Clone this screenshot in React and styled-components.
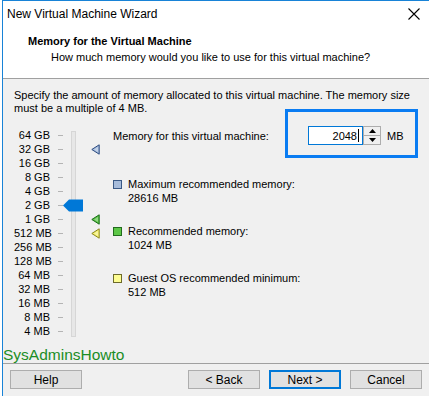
import styled, { createGlobalStyle } from "styled-components";

const GlobalStyle = createGlobalStyle`
  html, body {
    margin: 0;
    padding: 0;
    background: #fff;
  }
  body {
    font-family: "Liberation Sans", Arial, sans-serif;
    font-size: 11px;
    color: #000;
  }
`;

const scale = [
  "64 GB", "32 GB", "16 GB", "8 GB", "4 GB", "2 GB", "1 GB", "512 MB",
  "256 MB", "128 MB", "64 MB", "32 MB", "16 MB", "8 MB", "4 MB"
];

const markers = {
  1: { fill: "#a4bbdc", stroke: "#2e4c80" },
  6: { fill: "#57c143", stroke: "#1b6d1b" },
  7: { fill: "#f3ef6a", stroke: "#8a8620" }
};

const legend = [
  { label: "Maximum recommended memory:", value: "28616 MB", fill: "#a7bcdb", stroke: "#3a5986" },
  { label: "Recommended memory:", value: "1024 MB", fill: "#5cc746", stroke: "#226b1e" },
  { label: "Guest OS recommended minimum:", value: "512 MB", fill: "#fdfd92", stroke: "#6d6b2b" }
];

function Marker({ fill, stroke }) {
  return (
    <svg width="9" height="11" viewBox="0 0 9 11">
      <path d="M0.8 5.5 L8.2 0.8 L8.2 10.2 Z" fill={fill} stroke={stroke} strokeWidth="1" />
      <path d="M3 5.5 L7 3 L7 8 Z" fill="#fff" opacity="0.35" />
    </svg>
  );
}

function App() {
  return (
    <>
      <GlobalStyle />
      <Window>
        <TitleBar>
          <span>New Virtual Machine Wizard</span>
          <CloseButton>
            <svg width="12" height="12" viewBox="0 0 12 12">
              <path d="M0.5 0.5 L11.5 11.5 M11.5 0.5 L0.5 11.5" stroke="#000" strokeWidth="1.1" />
            </svg>
          </CloseButton>
        </TitleBar>

        <Header>
          <HeaderTitle>Memory for the Virtual Machine</HeaderTitle>
          <HeaderSub>How much memory would you like to use for this virtual machine?</HeaderSub>
        </Header>

        <Body>
          <Description>
            Specify the amount of memory allocated to this virtual machine. The memory size
            must be a multiple of 4 MB.
          </Description>

          <MemoryArea>
            <Scale>
              {scale.map((label, i) => (
                <ScaleLabel key={label} style={{ gridRow: i + 1 }}>{label}</ScaleLabel>
              ))}
              {scale.map((label, i) => (
                <Tick key={"t" + label} style={{ gridRow: i + 1 }} />
              ))}
              <Track />
              <Thumb style={{ gridRow: 6 }}>
                <svg width="20" height="13" viewBox="0 0 20 13">
                  <polygon points="0,6.5 6,0.5 20,0.5 20,12.5 6,12.5" fill="#0078d7" />
                </svg>
              </Thumb>
              {Object.entries(markers).map(([row, m]) => (
                <MarkerCell key={row} style={{ gridRow: Number(row) + 1 }}>
                  <Marker fill={m.fill} stroke={m.stroke} />
                </MarkerCell>
              ))}
            </Scale>

            <Details>
              <FieldRow>
                <FieldLabel>Memory for this virtual machine:</FieldLabel>
                <FieldGroup>
                  <NumberInput>
                    2048<Caret />
                  </NumberInput>
                  <Spinner>
                    <SpinButton>
                      <svg width="7" height="4" viewBox="0 0 7 4"><path d="M3.5 0 L7 4 L0 4 Z" fill="#000" /></svg>
                    </SpinButton>
                    <SpinButton>
                      <svg width="7" height="4" viewBox="0 0 7 4"><path d="M0 0 L7 0 L3.5 4 Z" fill="#000" /></svg>
                    </SpinButton>
                  </Spinner>
                  <Unit>MB</Unit>
                </FieldGroup>
              </FieldRow>

              <Legend>
                {legend.map((item) => (
                  <LegendItem key={item.label}>
                    <Swatch $fill={item.fill} $stroke={item.stroke} />
                    <div>
                      <div>{item.label}</div>
                      <div>{item.value}</div>
                    </div>
                  </LegendItem>
                ))}
              </Legend>
            </Details>
          </MemoryArea>
        </Body>

        <Footer>
          <Button>Help</Button>
          <FooterRight>
            <Button>&lt; Back</Button>
            <Button $primary>Next &gt;</Button>
            <Button>Cancel</Button>
          </FooterRight>
        </Footer>

        <Watermark>SysAdminsHowto</Watermark>
      </Window>
    </>
  );
}

export default App;

const Window = styled.div`
  position: relative;
  margin-left: 2px;
  height: 396px;
  box-sizing: border-box;
  border-left: 1px solid #1883d7;
  border-top: 1px solid #1883d7;
  display: flex;
  flex-direction: column;
  background: #f0f0f0;
  overflow: hidden;
`;

const TitleBar = styled.div`
  height: 25px;
  background: #fff;
  display: flex;
  align-items: center;
  justify-content: space-between;
  padding: 0 9px 0 4px;
  font-size: 12px;
`;

const CloseButton = styled.div`
  display: flex;
  align-items: center;
  padding-top: 1px;
`;

const Header = styled.div`
  background: #fff;
  height: 53px;
  border-bottom: 1px solid #a0a0a0;
  padding: 8px 0 0 25px;
  box-sizing: border-box;
`;

const HeaderTitle = styled.div`
  font-weight: bold;
  line-height: 14px;
`;

const HeaderSub = styled.div`
  line-height: 14px;
  margin-top: 2px;
  padding-left: 23px;
`;

const Body = styled.div`
  flex: 1;
  padding: 10px 0 0 11px;
`;

const Description = styled.div`
  line-height: 13px;
  width: 414px;
`;

const MemoryArea = styled.div`
  display: flex;
  align-items: flex-start;
  margin-top: 11px;
`;

const Scale = styled.div`
  display: grid;
  grid-template-columns: 44px 5px 20px 8px 9px;
  grid-template-rows: repeat(15, 14px);
  margin-top: 2px;
`;

const ScaleLabel = styled.div`
  grid-column: 1;
  text-align: right;
  padding-right: 8px;
  line-height: 14px;
  white-space: nowrap;
`;

const Tick = styled.div`
  grid-column: 2;
  align-self: center;
  height: 1px;
  width: 5px;
  background: #b4b4b4;
`;

const Track = styled.div`
  grid-column: 3;
  grid-row: 1 / -1;
  justify-self: center;
  width: 3px;
  margin-top: 3px;
  margin-bottom: 1px;
  background: #e7e7e7;
  border: 1px solid #d6d6d6;
  z-index: 0;
`;

const Thumb = styled.div`
  grid-column: 3;
  display: flex;
  align-items: center;
  z-index: 1;
`;

const MarkerCell = styled.div`
  grid-column: 5;
  display: flex;
  align-items: center;
`;

const Details = styled.div`
  margin-left: 13px;
  flex: 1;
  padding-right: 11px;
`;

const FieldRow = styled.div`
  display: flex;
  align-items: center;
`;

const FieldLabel = styled.div`
  width: 195px;
`;

const FieldGroup = styled.div`
  position: relative;
  display: flex;
  align-items: center;

  &::before {
    content: "";
    position: absolute;
    left: -23px;
    top: -17px;
    width: 133px;
    height: 49px;
    box-sizing: border-box;
    border: 3px solid #0a7cf2;
    pointer-events: none;
  }
`;

const NumberInput = styled.div`
  width: 55px;
  height: 19px;
  box-sizing: border-box;
  border: 1px solid #0078d7;
  background: #fff;
  display: flex;
  align-items: center;
  justify-content: flex-end;
  padding-right: 3px;
`;

const Caret = styled.span`
  display: inline-block;
  width: 1px;
  height: 13px;
  background: #000;
  margin-left: 1px;
`;

const Spinner = styled.div`
  display: flex;
  flex-direction: column;
  height: 19px;
`;

const SpinButton = styled.div`
  width: 18px;
  height: 10px;
  box-sizing: border-box;
  border: 1px solid #adadad;
  background: #f0f0f0;
  display: flex;
  align-items: center;
  justify-content: center;

  & + & {
    margin-top: -1px;
  }
`;

const Unit = styled.span`
  margin-left: 6px;
`;

const Legend = styled.div`
  margin-top: 32px;
  display: flex;
  flex-direction: column;
  gap: 19px;
  line-height: 14px;
`;

const LegendItem = styled.div`
  display: flex;
  align-items: flex-start;
  gap: 6px;
`;

const Swatch = styled.div`
  width: 9px;
  height: 9px;
  margin-top: 3px;
  box-sizing: border-box;
  border: 1px solid ${(p) => p.$stroke};
  background: ${(p) => p.$fill};
`;

const Footer = styled.div`
  height: 33px;
  box-sizing: border-box;
  border-top: 1px solid #a0a0a0;
  display: flex;
  justify-content: space-between;
  align-items: flex-start;
  padding: 6px 7px 0 7px;
`;

const FooterRight = styled.div`
  display: flex;
  gap: 9px;
`;

const Button = styled.div`
  width: 72px;
  height: 19px;
  box-sizing: border-box;
  display: flex;
  align-items: center;
  justify-content: center;
  background: #e1e1e1;
  border: ${(p) => (p.$primary ? "2px solid #0078d7" : "1px solid #adadad")};
  font-size: 12px;
`;

const Watermark = styled.div`
  position: absolute;
  left: 0;
  top: 344px;
  font-size: 15.5px;
  color: #1b8d25;
  line-height: 20px;
`;
